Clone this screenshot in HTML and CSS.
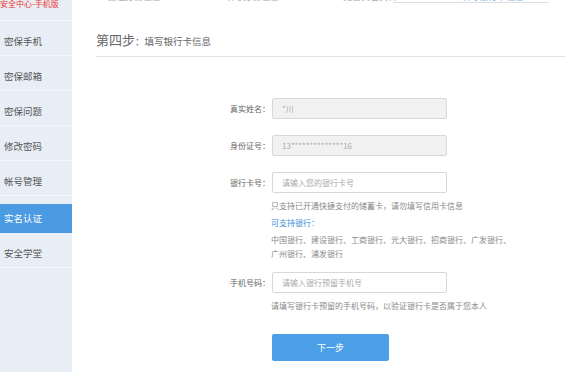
FILE: index.html
```html
<!DOCTYPE html>
<html lang="zh-CN">
<head>
    <meta charset="UTF-8">
    <title>实名认证</title>
    <link rel="stylesheet" href="styles.css">
</head>
<body>
<div class="page">
    <div class="sidebar">
        <div class="nav-item nav-top"><span>安全中心-手机版</span></div>
        <div class="nav-item">密保手机</div>
        <div class="nav-item">密保邮箱</div>
        <div class="nav-item">密保问题</div>
        <div class="nav-item">修改密码</div>
        <div class="nav-item">帐号管理</div>
        <div class="nav-item active">实名认证</div>
        <div class="nav-item">安全学堂</div>
    </div>
    <div class="main">
        <div class="steps">
            <div class="step">验证身份信息</div>
            <div class="step">填写身份信息</div>
            <div class="step step-line">完善实名资料</div>
            <div class="step current">填写银行卡信息</div>
        </div>
        <h2 class="title"><span class="title-big">第四步</span>：填写银行卡信息</h2>
        <form class="form">
            <div class="row">
                <label>真实姓名：</label>
                <input type="text" value="*川" disabled>
            </div>
            <div class="row">
                <label>身份证号：</label>
                <input type="text" value="13**************16" disabled>
            </div>
            <div class="row">
                <label>银行卡号：</label>
                <input type="text" placeholder="请输入您的银行卡号">
            </div>
            <div class="hints">
                <div class="hint">只支持已开通快捷支付的储蓄卡，请勿填写信用卡信息</div>
                <div class="hint hint-blue">可支持银行：</div>
                <div class="hint banks">中国银行、建设银行、工商银行、光大银行、招商银行、广发银行、<br>广州银行、浦发银行</div>
            </div>
            <div class="row row-phone">
                <label>手机号码：</label>
                <input type="text" placeholder="请输入银行预留手机号">
            </div>
            <div class="hints">
                <div class="hint">请填写银行卡预留的手机号码，以验证银行卡是否属于您本人</div>
            </div>
            <button type="button">下一步</button>
        </form>
    </div>
</div>
</body>
</html>
```

FILE: styles.css
```css
body { margin: 0; background: #fff; font-family: "Noto Sans CJK SC", "Noto Sans", sans-serif; }
.page { display: flex; min-height: 372px; }

.sidebar { width: 72px; flex-shrink: 0; background: #e8eef6; overflow: hidden; }
.nav-item {
    box-sizing: border-box; height: 35px;
    padding: 10px 0 0 4px; line-height: 20px;
    font-size: 9.5px; color: #555;
    border-bottom: 1px solid #f4f7fb;
    white-space: nowrap;
}
.nav-top { height: 21px; padding: 0; line-height: 12px; font-size: 8px; color: #e8342f; overflow: hidden; }
.nav-top span { display: block; margin-top: -2px; }
.nav-item.active {
    margin-top: 8px; height: 29px; padding-top: 0; line-height: 29px;
    background: #4a9be2; color: #fff; border-bottom: none;
}

.main { flex: 1; padding-left: 24px; overflow: hidden; }
.steps { display: flex; height: 4px; overflow: hidden; padding-left: 11px; }
.step {
    width: 118px; flex-shrink: 0;
    margin-top: -9px; line-height: 12px;
    font-size: 9px; color: #aaa; white-space: nowrap;
}
.step.current { color: #8ab4e0; }
.step-line { position: relative; }
.step-line::after {
    content: ""; position: absolute; left: 50px; top: 11px;
    width: 156px; border-top: 1px solid #ddd;
}

.title {
    margin: 26px 0 0; padding-bottom: 5px;
    border-bottom: 1px solid #e2e2e2;
    font-size: 9.5px; font-weight: normal; line-height: 20px; color: #666;
}
.title-big { font-size: 13px; }

.form { margin-top: 41px; }
.row {
    display: grid; grid-template-columns: 174px 175px; column-gap: 2px;
    align-items: center; margin-bottom: 16px;
}
.row label { text-align: right; font-size: 8px; color: #666; }
.row input {
    box-sizing: border-box; height: 21px; margin: 0;
    padding: 0 9px; border: 1px solid #d8d8d8; border-radius: 2px;
    font-family: inherit; font-size: 8px; color: #999; background: #fff;
    outline: none;
}
.row input:disabled { background: #f1f1f1; color: #aaa; }
.row input::placeholder { color: #aaa; }
.row:nth-child(3) { margin-bottom: 0; }
.row-phone { margin: 11px 0 0; }

.hints { margin-left: 175px; }
.hint { margin-top: 6px; line-height: 14px; font-size: 8px; color: #888; white-space: nowrap; }
.hint-blue, .banks { margin-top: 3px; }
.hint-blue { color: #3b8de0; }

button {
    display: block; width: 117px; height: 27px; margin: 21px 0 0 176px;
    background: #4a9fe6; color: #fff; font-family: inherit; font-size: 9px;
    border: none; border-radius: 2px; cursor: pointer;
}
```
